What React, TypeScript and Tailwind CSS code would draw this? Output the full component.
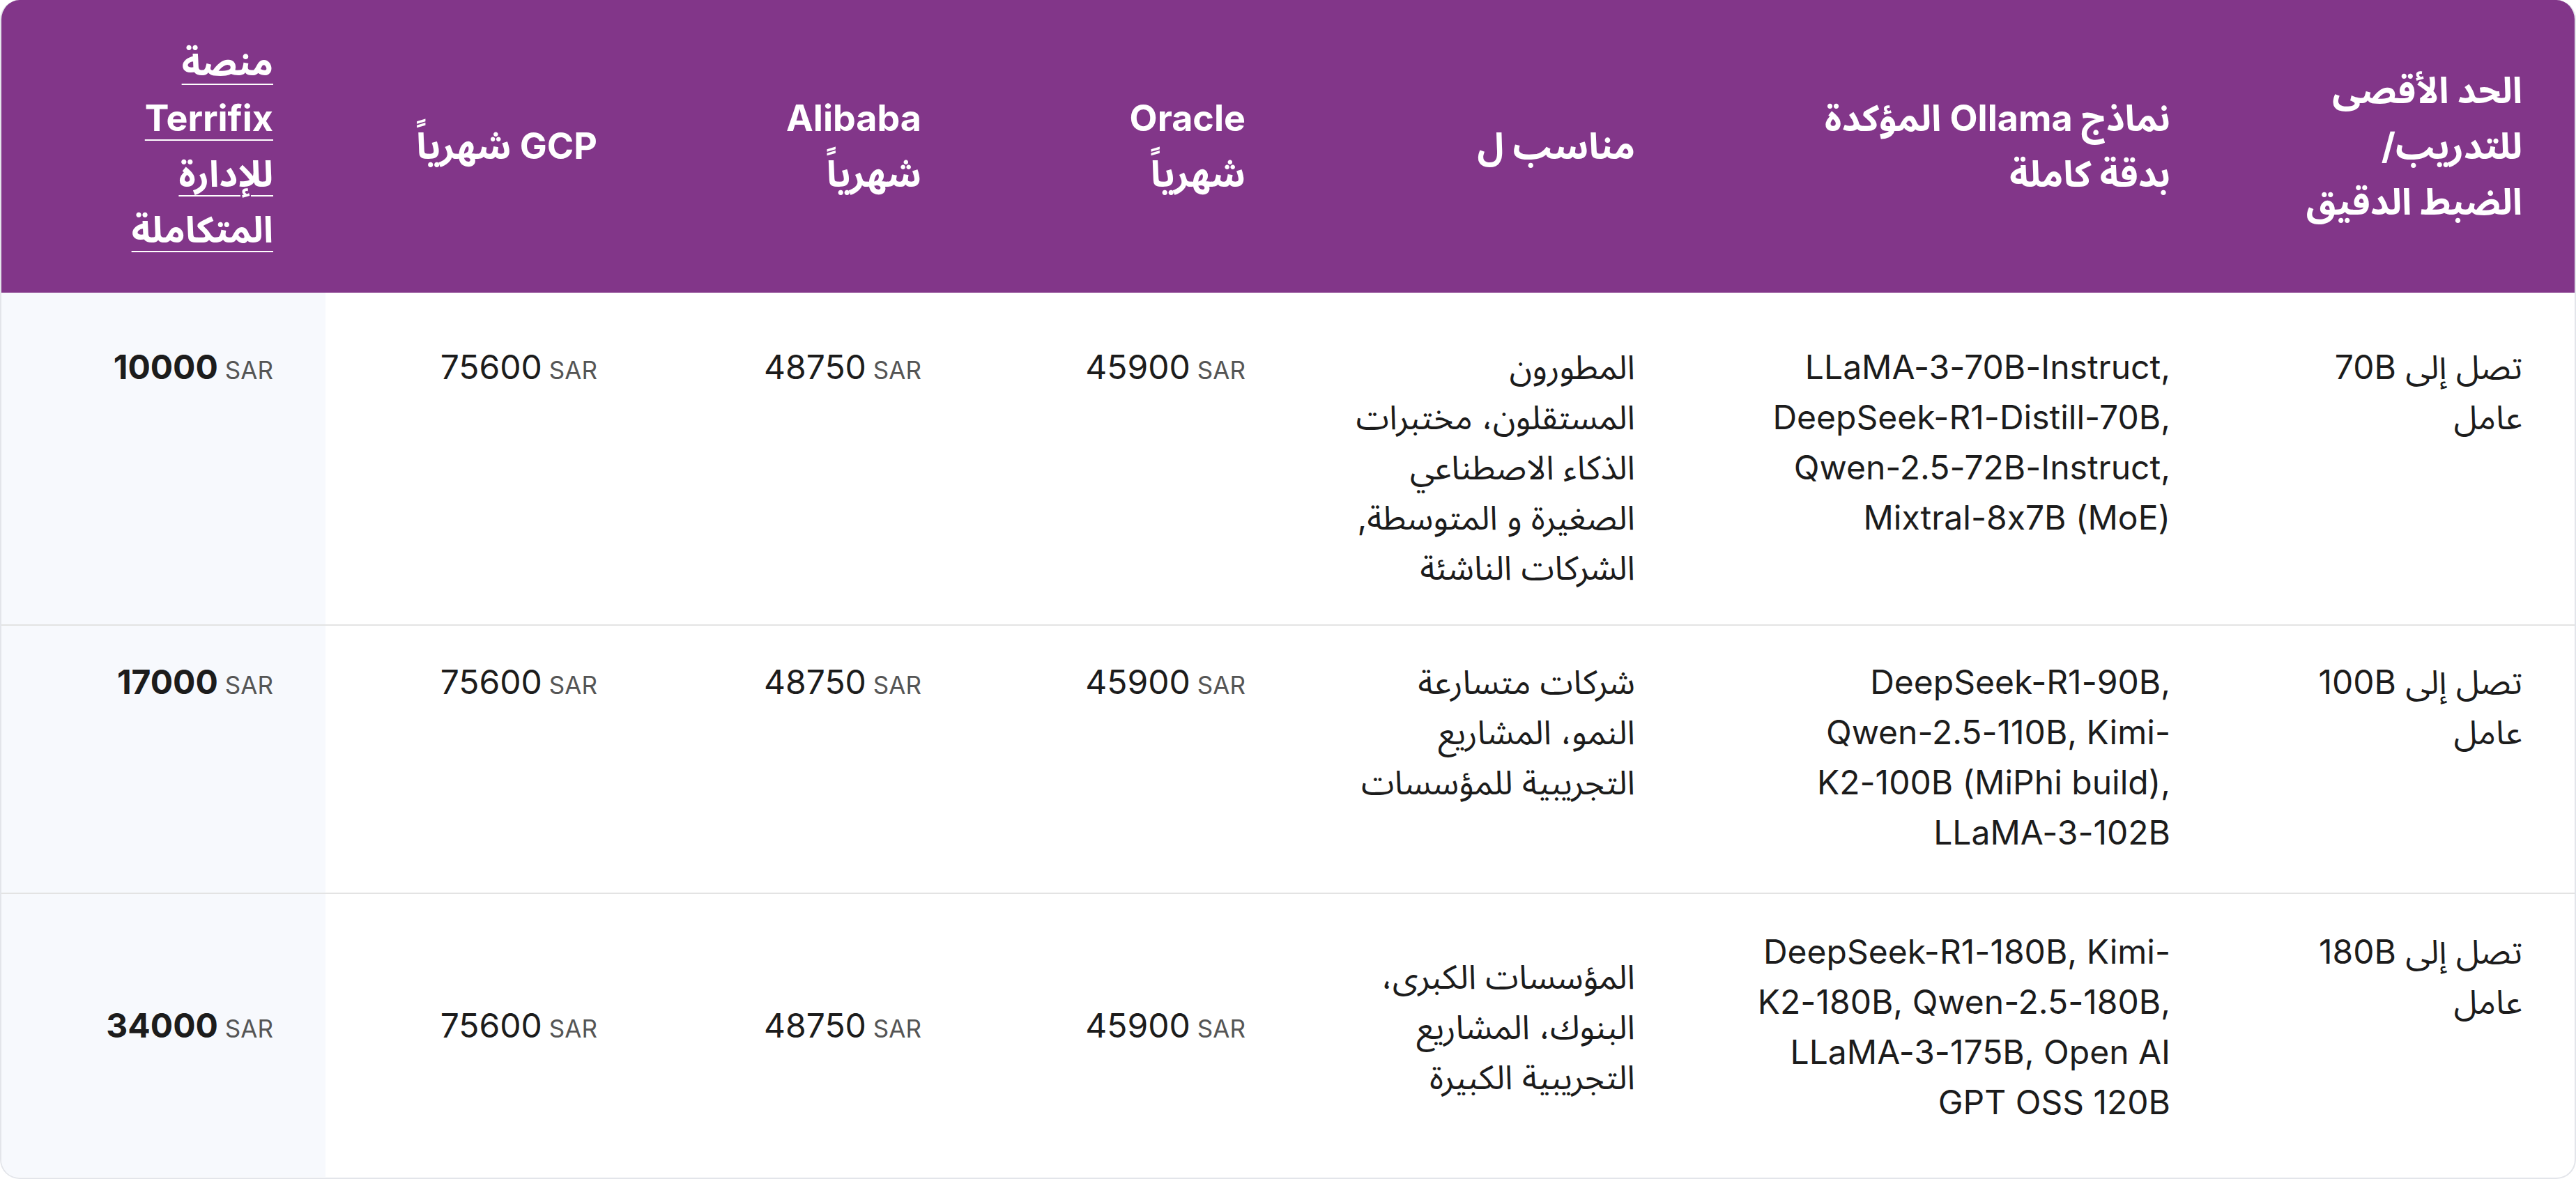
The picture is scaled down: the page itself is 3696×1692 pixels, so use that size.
import React from "react";

const GRID =
  "grid grid-cols-[505px_768px_559px_465px_465px_465px_465px]";

type Row = {
  max: string[];
  models: string[];
  fit: string[];
  prices: [string, string, string];
  terrifix: string;
  pt: string;
  pb: string;
  center: boolean;
};

const rows: Row[] = [
  {
    max: ["تصل إلى 70B", "عامل"],
    models: [
      "LLaMA-3-70B-Instruct,",
      "DeepSeek-R1-Distill-70B,",
      "Qwen-2.5-72B-Instruct,",
      "Mixtral-8x7B (MoE)",
    ],
    fit: [
      "المطورون",
      "المستقلون، مختبرات",
      "الذكاء الاصطناعي",
      "الصغيرة و المتوسطة,",
      "الشركات الناشئة",
    ],
    prices: ["45900", "48750", "75600"],
    terrifix: "10000",
    pt: "pt-[71px]",
    pb: "pb-[45px]",
    center: false,
  },
  {
    max: ["تصل إلى 100B", "عامل"],
    models: [
      "DeepSeek-R1-90B,",
      "Qwen-2.5-110B, Kimi-",
      "K2-100B (MiPhi build),",
      "LLaMA-3-102B",
    ],
    fit: ["شركات متسارعة", "النمو، المشاريع", "التجريبية للمؤسسات"],
    prices: ["45900", "48750", "75600"],
    terrifix: "17000",
    pt: "pt-[45px]",
    pb: "pb-[50px]",
    center: false,
  },
  {
    max: ["تصل إلى 180B", "عامل"],
    models: [
      "DeepSeek-R1-180B, Kimi-",
      "K2-180B, Qwen-2.5-180B,",
      "LLaMA-3-175B, Open AI",
      "GPT OSS 120B",
    ],
    fit: ["المؤسسات الكبرى،", "البنوك، المشاريع", "التجريبية الكبيرة"],
    prices: ["45900", "48750", "75600"],
    terrifix: "34000",
    pt: "pt-[47px]",
    pb: "pb-[71px]",
    center: true,
  },
];

function Lines({ lines, ltr }: { lines: string[]; ltr?: boolean }) {
  return (
    <>
      {lines.map((l, i) => (
        <div
          key={i}
          dir={ltr ? "ltr" : "rtl"}
          className="text-right whitespace-nowrap"
        >
          {l}
        </div>
      ))}
    </>
  );
}

function Price({ value, bold }: { value: string; bold?: boolean }) {
  return (
    <div dir="rtl" className="flex items-baseline gap-[10px]">
      <span className="text-[35px] text-[#555555]">SAR</span>
      <span
        className={
          bold
            ? "text-[48px] font-bold text-[#1c1c1c]"
            : "text-[48px] text-[#1c1c1c]"
        }
      >
        {value}
      </span>
    </div>
  );
}

function HeadCell({
  lines,
  underline,
}: {
  lines: string[];
  underline?: boolean;
}) {
  return (
    <div className="flex items-center px-[75px]">
      <div className="text-[52px] font-bold leading-[80px] text-white">
        {lines.map((l, i) => (
          <div key={i} className="text-right whitespace-nowrap">
            {underline ? (
              <span className="underline decoration-2 underline-offset-[12px]">
                {l}
              </span>
            ) : (
              l
            )}
          </div>
        ))}
      </div>
    </div>
  );
}

export default function App() {
  return (
    <div className="w-[3696px] h-[1692px] bg-white [font-family:Inter,'Noto_Sans_Arabic','Noto_Sans','DejaVu_Sans',sans-serif] [font-feature-settings:'calt'_0]">
      <div
        dir="rtl"
        className="w-[3696px] h-[1692px] overflow-hidden rounded-[28px] border-x-2 border-b-2 border-[#e3e5ea] bg-white"
      >
        <div className={`${GRID} h-[420px] bg-[#823689]`}>
          <HeadCell lines={["الحد الأقصى", "للتدريب/", "الضبط الدقيق"]} />
          <HeadCell lines={["نماذج Ollama المؤكدة", "بدقة كاملة"]} />
          <HeadCell lines={["مناسب ل"]} />
          <HeadCell lines={["Oracle", "شهرياً"]} />
          <HeadCell lines={["Alibaba", "شهرياً"]} />
          <HeadCell lines={["GCP شهرياً"]} />
          <HeadCell
            underline
            lines={["منصة", "Terrifix", "للإدارة", "المتكاملة"]}
          />
        </div>

        {rows.map((r, idx) => {
          const pad = `${r.pt} ${r.pb} px-[75px]`;
          const mid = r.center ? "flex flex-col justify-center" : "";
          return (
            <div
              key={idx}
              className={`${GRID} ${
                idx < rows.length - 1 ? "border-b-2 border-[#e3e3e3]" : ""
              } text-[48px] leading-[72px] text-[#1c1c1c]`}
            >
              <div className={pad}>
                <Lines lines={r.max} />
              </div>
              <div className={pad}>
                <Lines lines={r.models} ltr />
              </div>
              <div className={`${pad} ${mid}`}>
                <div>
                  <Lines lines={r.fit} />
                </div>
              </div>
              {r.prices.map((p, i) => (
                <div key={i} className={`${pad} ${mid}`}>
                  <Price value={p} />
                </div>
              ))}
              <div className={`${pad} ${mid} bg-[#f7f9fd]`}>
                <Price value={r.terrifix} bold />
              </div>
            </div>
          );
        })}
      </div>
    </div>
  );
}
